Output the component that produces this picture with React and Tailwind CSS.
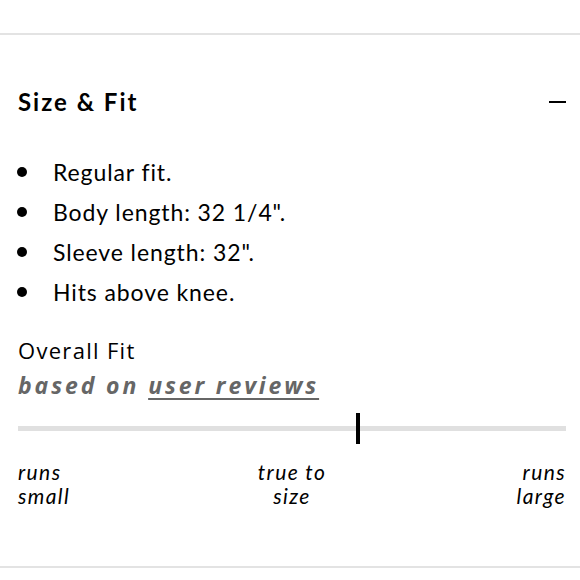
import React from 'react';

const bullets = ['Regular fit.', 'Body length: 32 1/4".', 'Sleeve length: 32".', 'Hits above knee.'];

export default function App() {
  return (
    <div className="w-[580px] h-[580px] bg-white overflow-hidden text-black" style={{ fontFamily: 'Lato, "Open Sans", sans-serif' }}>
      <div className="pt-[33px]">
        <div className="h-[2px] bg-[#e3e3e3]" />
      </div>

      <div className="pl-[18px] pr-[14px]">
        {/* header */}
        <div className="pt-[51px] flex items-center justify-between h-[83px]">
          <h2 className="text-[24px] leading-[32px] font-bold tracking-[2px]">Size &amp; Fit</h2>
          <span className="block w-[17px] h-[2px] bg-black" />
        </div>

        {/* bullets */}
        <ul className="mt-[34px]">
          {bullets.map((b) => (
            <li key={b} className="flex items-center h-[40px] text-[23px] tracking-[0.9px]">
              <span className="w-[10px] h-[10px] rounded-full bg-black ml-[-1px] mr-[26px]" />
              {b}
            </li>
          ))}
        </ul>

        {/* overall fit */}
        <div className="mt-[23px] text-[22px] leading-[30px] tracking-[1.3px]" style={{ fontFamily: '"Open Sans", sans-serif' }}>Overall Fit</div>
        <div className="mt-[5px] text-[23px] leading-[30px] italic font-bold text-[#666666] tracking-[2.9px]" style={{ fontFamily: '"Open Sans", sans-serif' }}>
          based on <span className="underline underline-offset-[4px] decoration-[2px]">user reviews</span>
        </div>

        {/* slider */}
        <div className="relative mt-[13px] h-[31px] flex items-center">
          <div className="w-full h-[5px] bg-[#e0e0e0]" />
          <div className="absolute top-0 left-[338px] w-[4px] h-[31px] bg-black" />
        </div>

        <div className="mt-[16px] grid grid-cols-3 text-[21px] leading-[24px] italic tracking-[1.4px]">
          <div className="text-left">runs<br />small</div>
          <div className="text-center">true to<br />size</div>
          <div className="text-right">runs<br />large</div>
        </div>
      </div>

      <div className="mt-[58px] h-[2px] bg-[#e3e3e3]" />
    </div>
  );
}
